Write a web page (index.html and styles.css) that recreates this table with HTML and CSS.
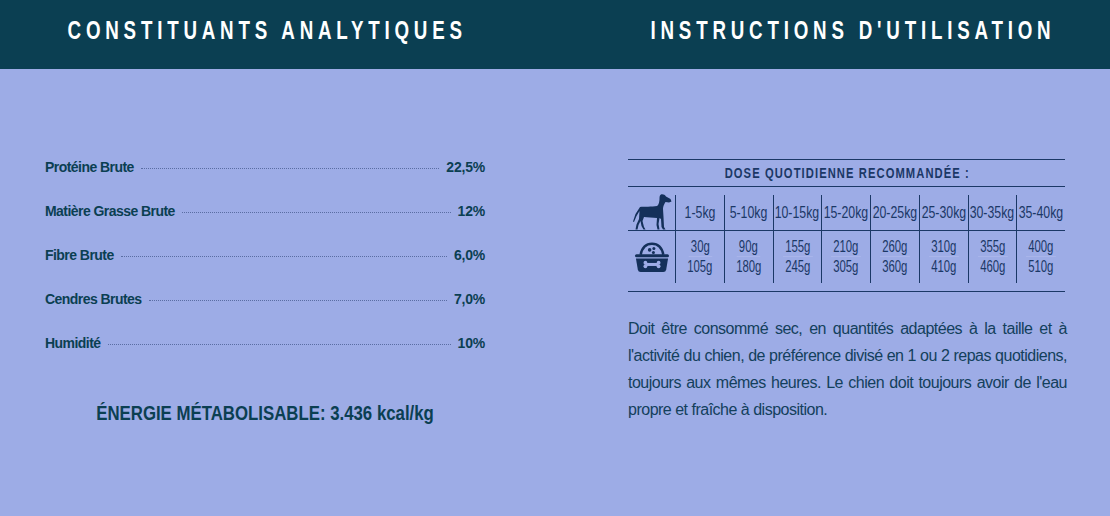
FILE: index.html
```html
<!DOCTYPE html>
<html lang="fr">
<head>
<meta charset="utf-8">
<title>Constituants analytiques</title>
<link rel="stylesheet" href="styles.css">
</head>
<body>
<div class="page">
  <header class="bar">
    <h2 class="bar-title"><span class="cond">CONSTITUANTS ANALYTIQUES</span></h2>
    <h2 class="bar-title"><span class="cond">INSTRUCTIONS D'UTILISATION</span></h2>
  </header>
  <main class="body">
    <section class="col left">
      <ul class="list">
        <li class="row"><span class="label">Protéine Brute</span><span class="leader"></span><span class="val">22,5%</span></li>
        <li class="row"><span class="label">Matière Grasse Brute</span><span class="leader"></span><span class="val">12%</span></li>
        <li class="row"><span class="label">Fibre Brute</span><span class="leader"></span><span class="val">6,0%</span></li>
        <li class="row"><span class="label">Cendres Brutes</span><span class="leader"></span><span class="val">7,0%</span></li>
        <li class="row"><span class="label">Humidité</span><span class="leader"></span><span class="val">10%</span></li>
      </ul>
      <p class="energy"><span class="cond">ÉNERGIE MÉTABOLISABLE: 3.436 kcal/kg</span></p>
    </section>
    <section class="col right">
      <div class="dose">
        <div class="dose-title"><span class="cond">DOSE QUOTIDIENNE RECOMMANDÉE :</span></div>
        <div class="dose-body">
          <div class="grid">
            <div class="cell icon top">
              <svg width="40" height="38" viewBox="0 0 40 38" aria-hidden="true">
                <path fill="#14305a" d="M29 0.5 C31 0 33 1 34 2.5 L38.5 5 L39.5 7.5 L37 8.5 L33.5 8 C32 10 31 13 31 15 L31.5 23 L32 33 L33.5 35.5 L31 35.5 L29.5 33 L29 25 L27.5 24 L26.5 30 L27.5 35.5 L25.5 35.5 L24.5 31 L25 24 C21 23.5 15 23.5 12 23 L10.5 27 L12 33 L13.5 35.5 L11.5 35.5 L9.5 32 L8.5 27 L6.5 31 L5.5 35.5 L3.5 35.5 L4.5 30.5 L7 25 L7.5 17 L4.5 22 L2 28 L1 27.5 L3.5 20 L8 13 C12 12.5 20 13 25 12 C27 11 27.5 7 27.5 4 C27.5 2 28 1 29 0.5 Z"/>
              </svg>
            </div>
            <div class="cell top"><span class="cond">1-5kg</span></div>
            <div class="cell top"><span class="cond">5-10kg</span></div>
            <div class="cell top"><span class="cond">10-15kg</span></div>
            <div class="cell top"><span class="cond">15-20kg</span></div>
            <div class="cell top"><span class="cond">20-25kg</span></div>
            <div class="cell top"><span class="cond">25-30kg</span></div>
            <div class="cell top"><span class="cond">30-35kg</span></div>
            <div class="cell top"><span class="cond">35-40kg</span></div>
            <div class="cell icon">
              <svg width="38" height="34" viewBox="0 0 40 36" aria-hidden="true">
                <path d="M8 15.5 C9.5 8 14 4 20 4 C26 4 30.5 8 32 15.5" fill="none" stroke="#14305a" stroke-width="2.6"/>
                <circle cx="17.5" cy="10.5" r="1.9" fill="#14305a"/>
                <circle cx="22" cy="9" r="1.6" fill="#14305a"/>
                <circle cx="21.5" cy="13.2" r="1.6" fill="#14305a"/>
                <rect x="2" y="15" width="36" height="3.2" rx="1.6" fill="#14305a"/>
                <path d="M3 19.5 H37 L35 31.5 Q34.5 34 32 34 H8 Q5.5 34 5 31.5 Z" fill="#14305a"/>
                <rect x="13" y="24.3" width="14" height="3.2" fill="#9dace6"/>
                <circle cx="13" cy="24" r="2" fill="#9dace6"/>
                <circle cx="13" cy="27.8" r="2" fill="#9dace6"/>
                <circle cx="27" cy="24" r="2" fill="#9dace6"/>
                <circle cx="27" cy="27.8" r="2" fill="#9dace6"/>
              </svg>
            </div>
            <div class="cell qty"><span class="cond q1">30g</span><span class="cond">105g</span></div>
            <div class="cell qty"><span class="cond q1">90g</span><span class="cond">180g</span></div>
            <div class="cell qty"><span class="cond q1">155g</span><span class="cond">245g</span></div>
            <div class="cell qty"><span class="cond q1">210g</span><span class="cond">305g</span></div>
            <div class="cell qty"><span class="cond q1">260g</span><span class="cond">360g</span></div>
            <div class="cell qty"><span class="cond q1">310g</span><span class="cond">410g</span></div>
            <div class="cell qty"><span class="cond q1">355g</span><span class="cond">460g</span></div>
            <div class="cell qty"><span class="cond q1">400g</span><span class="cond">510g</span></div>
          </div>
        </div>
      </div>
      <p class="text">Doit être consommé sec, en quantités adaptées à la taille et à l'activité du chien, de préférence divisé en 1 ou 2 repas quotidiens, toujours aux mêmes heures. Le chien doit toujours avoir de l'eau propre et fraîche à disposition.</p>
    </section>
  </main>
</div>
</body>
</html>
```

FILE: styles.css
```css
* { box-sizing: border-box; }
html, body { margin: 0; padding: 0; }
body {
  background: #9dace6;
  font-family: "Liberation Sans", Arial, sans-serif;
  color: #0b3f52;
}
.page { width: 1110px; height: 516px; overflow: hidden; }

/* horizontally condensed glyphs (Helvetica Condensed look) */
.cond {
  display: inline-block;
  white-space: nowrap;
  transform-origin: center center;
  flex: none;
}

.bar {
  background: #0b3f52;
  height: 69px;
  display: grid;
  grid-template-columns: 527px 527px;
  column-gap: 56px;
  padding-top: 12px;
}
.bar-title {
  margin: 0;
  text-align: center;
  color: #ffffff;
  font-size: 25px;
  line-height: 36px;
  font-weight: 700;
  white-space: nowrap;
}
.bar-title .cond {
  letter-spacing: 6.4px;
  margin-right: -6.4px;
  transform: scaleX(0.75);
}

.body {
  display: grid;
  grid-template-columns: 527px 527px;
  column-gap: 56px;
}
.left { padding: 76px 42px 0 45px; }
.right { padding: 90px 43px 0 45px; }

.list { list-style: none; margin: 0; padding: 0; }
.row {
  display: flex;
  align-items: center;
  height: 44px;
  font-size: 14px;
  font-weight: 700;
}
.label { letter-spacing: -0.55px; }
.leader {
  flex: 1;
  border-bottom: 1px dotted #5a6da3;
  margin: 2px 7px 0 7px;
  height: 0;
}
.val { text-align: right; letter-spacing: -0.2px; }

.energy {
  margin: 36px 0 0;
  text-align: center;
  font-size: 21px;
  line-height: 24px;
  font-weight: 700;
}
.energy .cond { transform: scaleX(0.8); }

.dose { width: 437px; color: #1b3866; }
.dose-title {
  border-top: 1px solid #1b3866;
  border-bottom: 1px solid #1b3866;
  height: 28px;
  line-height: 26px;
  text-align: center;
  font-size: 14px;
  font-weight: 700;
}
.dose-title .cond {
  letter-spacing: 1.35px;
  margin-right: -1.35px;
  transform: scaleX(0.8);
}
.dose-body {
  padding: 8px 0 8px;
  border-bottom: 1px solid #1b3866;
}
.grid {
  display: grid;
  grid-template-columns: 47px repeat(8, minmax(0, 1fr));
  grid-template-rows: 36px 52px;
}
.cell {
  min-width: 0;
  border-left: 1px solid #1b3866;
  display: flex;
  align-items: center;
  justify-content: center;
  font-size: 16px;
  white-space: nowrap;
}
.cell.top .cond { transform: scaleX(0.77); }
.cell.icon { border-left: none; }
.cell.top { border-bottom: 1px solid #1b3866; }
.qty {
  flex-direction: column;
  font-size: 16px;
  line-height: 19px;
}
.qty .cond { transform: scaleX(0.71); }
.q1 { border-bottom: 1px solid #a9b5ea; padding: 0 3px; line-height: 18px; }

.text {
  margin: 23px 0 0;
  font-size: 16px;
  line-height: 27px;
  text-align: justify;
  letter-spacing: -0.5px;
  color: #13405c;
}
```
